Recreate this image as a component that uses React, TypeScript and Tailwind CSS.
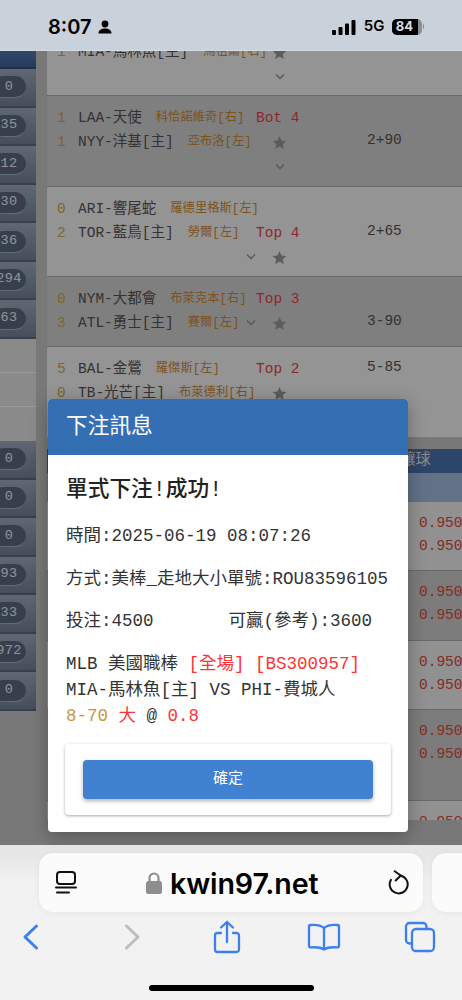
/**
 * Pantalla de apuestas en Safari móvil con el modal de confirmación encima.
 */
import type { ReactNode } from "react";

const MONO = "[font-family:'Liberation_Mono','Noto_Sans_CJK_TC',monospace]";

/* ── Iconos ─────────────────────────────────────────────── */

function Chevron() {
  return (
    <svg width="12" height="8" viewBox="0 0 12 8" fill="none" stroke="#8f8f8f" strokeWidth="1.3">
      <path d="M2 1.5 6 5.5 10 1.5" />
    </svg>
  );
}

function Star() {
  return (
    <svg width="15" height="15" viewBox="0 0 24 24" fill="#9a9a9a">
      <path d="M12 1.5 15.2 8.6 23 9.4 17.2 14.6 18.9 22.3 12 18.3 5.1 22.3 6.8 14.6 1 9.4 8.8 8.6Z" />
    </svg>
  );
}

function Marks({ chevron = false }: { chevron?: boolean }) {
  return (
    <span className="flex h-6 items-center">
      {chevron ? (
        <span className="-ml-[11px] mr-[15px] flex w-3">
          <Chevron />
        </span>
      ) : (
        <span className="w-4" />
      )}
      <Star />
    </span>
  );
}

/* ── Partidos ───────────────────────────────────────────── */

function Line({
  score,
  team,
  pitcher,
  gap = 14,
  mid,
  clock,
}: {
  score?: string;
  team?: string;
  pitcher?: string;
  gap?: number;
  mid?: ReactNode;
  clock?: string;
}) {
  return (
    <div className="grid h-6 grid-cols-[21px_178px_111px_1fr] items-center whitespace-nowrap pl-[10px] text-[14.5px] leading-6">
      <span className="text-[#d1a94a]">{score}</span>
      <span className="flex items-center text-[#555]">
        {team}
        {pitcher && (
          <span className="text-[12.3px] text-[#cf8a35]" style={{ marginLeft: gap }}>
            {pitcher}
          </span>
        )}
      </span>
      <span className="text-[#e8444c]">{mid}</span>
      <span className="-mt-1 text-[#555]">{clock}</span>
    </div>
  );
}

const sideTop = ["0", "35", "12", "30", "36", "294", "63"];
const sideBottom = ["0", "0", "0", "93", "33", "972", "0"];

function SideItem({ value }: { value: string }) {
  return (
    <div className="flex h-[38.57px] items-center border-b-2 border-[#5f6c80] bg-gradient-to-b from-[#9fadbf] to-[#76839a]">
      <span className="-ml-2 flex h-[22px] w-[34px] items-center justify-center rounded-full border-b border-[#a6b2c2] bg-[#5c6a80] text-[13.5px] tracking-wide text-[#f4f4f4]">
        {value}
      </span>
    </div>
  );
}

function Odds() {
  return (
    <div className="flex flex-col pl-[372px] pt-[10px] text-[14.5px] leading-[23px] text-[#e04a3a]">
      <span>0.950</span>
      <span>0.950</span>
    </div>
  );
}

/* ── App ────────────────────────────────────────────────── */

export default function App() {
  return (
    <div className={`flex h-[1000px] w-[462px] flex-col overflow-hidden bg-white ${MONO}`}>
      <StatusBar />

      <div className="relative flex h-[794px] overflow-hidden bg-[#c8c8c8]">
        <aside className="w-9 shrink-0 overflow-hidden">
          <div className="h-[18px] border-b-2 border-[#33527f] bg-gradient-to-b from-[#5077b0] to-[#3f659c]" />
          {sideTop.map((v, i) => (
            <SideItem key={i} value={v} />
          ))}
          <div className="h-[34px] border-b border-white bg-[#e6e6e6]" />
          <div className="h-[34px] border-b border-white bg-[#e6e6e6]" />
          <div className="h-[34px] bg-[#e6e6e6]" />
          {sideBottom.map((v, i) => (
            <SideItem key={i} value={v} />
          ))}
        </aside>

        <main className="ml-[11px] flex-1 -mt-[21px]">
          <div className="h-[66px] border-b border-[#b0b0b0] bg-[#f7f7f7] pt-[10px]">
            <Line score="1" team="MIA-馬林魚[主]" pitcher="馬祖爾[右]" gap={15} mid={<Marks />} />
            <div className="flex h-[26px] items-center pl-[227px]">
              <Chevron />
            </div>
          </div>
          <div className="h-[91px] border-b border-[#b0b0b0] bg-[#d4d4d4] pt-[10px]">
            <Line score="1" team="LAA-天使" pitcher="科恰諾維奇[右]" mid="Bot 4" />
            <Line score="1" team="NYY-洋基[主]" pitcher="亞布洛[左]" mid={<Marks />} clock="2+90" />
            <div className="flex h-[26px] items-center pl-[227px]">
              <Chevron />
            </div>
          </div>
          <div className="h-[90px] border-b border-[#b0b0b0] bg-[#f7f7f7] pt-[10px]">
            <Line score="0" team="ARI-響尾蛇" pitcher="羅德里格斯[左]" />
            <Line score="2" team="TOR-藍鳥[主]" pitcher="勞爾[左]" mid="Top 4" clock="2+65" />
            <Line mid={<Marks chevron />} />
          </div>
          <div className="h-[70px] border-b border-[#b0b0b0] bg-[#d4d4d4] pt-[10px]">
            <Line score="0" team="NYM-大都會" pitcher="布萊克本[右]" mid="Top 3" />
            <Line score="3" team="ATL-勇士[主]" pitcher="賽爾[左]" mid={<Marks chevron />} clock="3-90" />
          </div>
          <div className="h-[90px] bg-[#f7f7f7] pt-[10px]">
            <Line score="5" team="BAL-金鶯" pitcher="羅傑斯[左]" mid="Top 2" clock="5-85" />
            <Line score="0" team="TB-光芒[主]" pitcher="布萊德利[右]" mid={<Marks />} />
          </div>

          <div className="mt-[12px] flex h-6 items-center justify-end bg-[#4c74ae] pr-[32px] text-[15px] text-[#e8e8e8]">
            讓球
          </div>
          <div className="h-[29px] bg-[#a3bddf]" />
          <div className="h-[69px] border-b border-[#b0b0b0] bg-[#f2f2f2]">
            <Odds />
          </div>
          <div className="h-[70px] border-b border-[#b0b0b0] bg-[#cfcfcf]">
            <Odds />
          </div>
          <div className="h-[69px] border-b border-[#b0b0b0] bg-[#f2f2f2]">
            <Odds />
          </div>
          <div className="h-[91px] border-b border-[#b0b0b0] bg-[#cfcfcf]">
            <Odds />
          </div>
          <div className="h-[19px] overflow-hidden bg-[#f2f2f2]">
            <Odds />
          </div>
        </main>

        <div className="absolute inset-0 bg-black/40" />
        <Modal />
      </div>

      <SafariBar />
    </div>
  );
}

/* ── Modal ──────────────────────────────────────────────── */

function Modal() {
  return (
    <div className="absolute left-12 top-[348px] h-[433px] w-[360px] overflow-hidden rounded bg-white shadow-[0_4px_18px_rgba(0,0,0,0.3)]">
      <div className="flex h-[56px] items-center bg-[#346fb3] pl-[18px] pt-[3px] text-[21.7px] text-white">下注訊息</div>
      <div className="whitespace-nowrap pl-[18px] text-[17.5px] text-[#333]">
        <h2 className="mt-[19px] h-[34px] text-[21.7px] font-medium leading-[34px] text-[#222]">單式下注!成功!</h2>
        <p className="mt-[15px] h-[26px] leading-[26px]">時間:2025-06-19 08:07:26</p>
        <p className="mt-[17px] h-[26px] leading-[26px]">方式:美棒_走地大小單號:ROU83596105</p>
        <p className="mt-[16px] h-[26px] leading-[26px]">
          投注:4500<span className="ml-[75px]">可贏(參考):3600</span>
        </p>
        <div className="mt-[17px] leading-[26px]">
          <div className="h-[26px]">
            MLB 美國職棒 <span className="text-[#f33]">[全場] [BS300957]</span>
          </div>
          <div className="h-[26px]">MIA-馬林魚[主] VS PHI-費城人</div>
          <div className="h-[26px]">
            <span className="text-[#c49a3f]">8-70</span> <span className="text-[#f33]">大</span> @{" "}
            <span className="text-[#f33]">0.8</span>
          </div>
        </div>
      </div>
      <div className="mx-[17px] mt-[15px] h-[71px] rounded-sm bg-white px-[18px] py-[16px] shadow-[0_1px_3px_rgba(0,0,0,0.35)]">
        <button
          type="button"
          className="flex h-[39px] w-full items-center justify-center rounded-sm bg-[#4081d0] pb-[5px] text-[15px] text-white shadow-[0_2px_4px_rgba(0,0,0,0.3)] [font-family:'Noto_Sans_CJK_TC',sans-serif]"
        >
          確定
        </button>
      </div>
    </div>
  );
}

/* ── Chrome del teléfono ────────────────────────────────── */

function StatusBar() {
  return (
    <div className="flex h-[51px] shrink-0 items-center border-b border-[#d6dbe2] bg-[#c9d1da] pl-[48px] pr-[38px] pt-[3px] text-black [font-family:Inter,sans-serif]">
      <span className="text-[20px] font-semibold">8:07</span>
      <svg className="ml-[6px]" width="14" height="14" viewBox="0 0 14 14" fill="#000">
        <circle cx="7" cy="4" r="3.4" />
        <path d="M0.5 13.5c0-3.4 2.8-5 6.5-5s6.500 1.600 6.500 5Z" />
      </svg>
      <svg className="ml-auto" width="24" height="16" viewBox="0 0 24 16" fill="#000">
        <rect x="0" y="11" width="4" height="5" rx="1" />
        <rect x="6.500" y="8" width="4" height="8" rx="1" />
        <rect x="13" y="4.500" width="4" height="11.500" rx="1" />
        <rect x="19.500" y="1" width="4" height="15" rx="1" />
      </svg>
      <span className="ml-[8px] text-[15px] font-semibold">5G</span>
      <span className="relative ml-[7px] flex h-[16px] w-[30px] items-center overflow-hidden rounded-[5px] bg-[#8a8f96]">
        <span className="flex h-full w-[26px] items-center justify-center bg-black text-[13px] font-bold text-[#d8dde3]">
          84
        </span>
      </span>
      <span className="ml-[1px] h-[5px] w-[1.5px] rounded-r bg-[#8a8f96]" />
    </div>
  );
}

function SafariBar() {
  return (
    <div className="relative flex-1 bg-gradient-to-b from-[#e6e6e6] from-[5%] to-[#f2f2f2] to-[25%] pt-[8px]">
      <div className="flex h-[59px]">
        <div className="ml-[39px] flex w-[384px] shrink-0 items-center rounded-[14px] bg-[#fbfbfb] pl-[16px] pr-[14px] shadow-[0_1px_6px_rgba(0,0,0,0.06)]">
          <svg width="22" height="25" viewBox="0 0 22 25" fill="none" stroke="#111" strokeWidth="2">
            <rect x="2" y="2" width="18" height="12" rx="3" />
            <path d="M1 17.500h20M2 22.500h12" strokeLinecap="round" />
          </svg>
          <svg className="ml-[68px]" width="18" height="24" viewBox="0 0 18 24">
            <path d="M4.500 11V7a4.500 4.500 0 0 1 9 0v4" fill="none" stroke="#8e8e8e" strokeWidth="2.200" />
            <rect x="1" y="10" width="16" height="13" rx="2.500" fill="#8e8e8e" />
          </svg>
          <span className="ml-[7px] pt-[3px] text-[28.6px] font-semibold tracking-[-0.1px] text-black [font-family:Inter,sans-serif]">
            kwin97.net
          </span>
          <svg className="ml-auto" width="22" height="26" viewBox="0 0 22 26" fill="none" stroke="#111" strokeWidth="2" strokeLinecap="round" strokeLinejoin="round">
            <path d="M13 5.500A9 9 0 1 1 3.900 9.900" />
            <path d="M7.700 1.200 13.700 5.500 8.700 10.500" />
          </svg>
        </div>
        <div className="ml-[9px] w-[60px] shrink-0 rounded-[14px] bg-[#fbfbfb] shadow-[0_1px_6px_rgba(0,0,0,0.06)]" />
      </div>

      <Toolbar />
      <div className="absolute bottom-[9px] left-[149px] h-[6px] w-[165px] rounded-full bg-black" />
    </div>
  );
}

function Toolbar() {
  const blue = "#3d7ff2";
  return (
    <div className="relative mt-[8px] h-[46px]">
      <div className="flex items-center">
        <svg className="ml-[22px]" width="18" height="28" viewBox="0 0 18 28" fill="none" stroke={blue} strokeWidth="3" strokeLinecap="round" strokeLinejoin="round">
          <path d="M14.500 3 3 14 14.500 25" />
        </svg>
        <svg className="ml-[83px]" width="18" height="28" viewBox="0 0 18 28" fill="none" stroke="#bdbdbd" strokeWidth="3" strokeLinecap="round" strokeLinejoin="round">
          <path d="M3.500 3 15 14 3.500 25" />
        </svg>
        <svg className="ml-[72px]" width="28" height="34" viewBox="0 0 28 34" fill="none" stroke={blue} strokeWidth="2.300" strokeLinecap="round" strokeLinejoin="round">
          <path d="M8 13H4.500A2.500 2.500 0 0 0 2 15.500v14A2.500 2.500 0 0 0 4.500 32h19a2.500 2.500 0 0 0 2.500-2.500v-14A2.500 2.500 0 0 0 23.500 13H20" />
          <path d="M14 22V2M8 7.500 14 2 20 7.500" />
        </svg>
        <svg className="ml-[66px]" width="34" height="28" viewBox="0 0 34 28" fill="none" stroke={blue} strokeWidth="2.300" strokeLinejoin="round">
          <path d="M17 5C14 2.500 9 1.500 3.500 2 2.500 2.100 2 2.800 2 3.800V23c0 1 .8 1.500 1.800 1.400C9 24 14 24.500 17 26.500 20 24.500 25 24 30.200 24.400 31.200 24.500 32 24 32 23V3.800c0-1-.5-1.700-1.500-1.800C25 1.500 20 2.500 17 5Z" />
          <path d="M17 5V26" />
        </svg>
        <svg className="ml-[63px]" width="32" height="32" viewBox="0 0 32 32" fill="none" stroke={blue} strokeWidth="2.300" strokeLinejoin="round">
          <path d="M7 22.500H5.500A3.500 3.500 0 0 1 2 19V5.500A3.500 3.500 0 0 1 5.500 2H19A3.500 3.500 0 0 1 22.500 5.500V7" />
          <rect x="8" y="8" width="22" height="22" rx="4" />
        </svg>
      </div>
    </div>
  );
}
